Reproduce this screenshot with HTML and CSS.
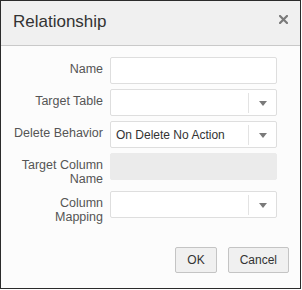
FILE: index.html
```html
<!DOCTYPE html>
<html>
<head>
    <title>Relationship</title>
    <link rel="stylesheet" href="styles.css">
</head>
<body>
    <div class="dialog">
        <div class="dialog-header">
            <h2 class="dialog-title">Relationship</h2>
            <button class="close-button" title="Close">
                <svg width="9" height="9" viewBox="0 0 9 9">
                    <path d="M1 1 L8 8 M8 1 L1 8" stroke="#7a7a7a" stroke-width="2.2" stroke-linecap="square"/>
                </svg>
            </button>
        </div>

        <div class="dialog-body">
            <div class="form-grid">
                <label class="field-label">Name</label>
                <input type="text" class="text-field">

                <label class="field-label">Target Table</label>
                <div class="select-field">
                    <span class="select-value"></span>
                    <span class="select-arrow"></span>
                </div>

                <label class="field-label">Delete Behavior</label>
                <div class="select-field">
                    <span class="select-value">On Delete No Action</span>
                    <span class="select-arrow"></span>
                </div>

                <label class="field-label">Target Column Name</label>
                <div class="text-field disabled"></div>

                <label class="field-label">Column Mapping</label>
                <div class="select-field">
                    <span class="select-value"></span>
                    <span class="select-arrow"></span>
                </div>
            </div>
        </div>

        <div class="dialog-footer">
            <button class="dialog-button">OK</button>
            <button class="dialog-button">Cancel</button>
        </div>
    </div>
</body>
</html>
```

FILE: styles.css
```css
/* Reset and base styles */
* {
    margin: 0;
    padding: 0;
    box-sizing: border-box;
    font-family: "Liberation Sans", Arial, sans-serif;
}

body {
    background-color: #ffffff;
    color: #333333;
}

.dialog {
    width: 301px;
    height: 289px;
    border: 1px solid #2b2b2b;
    background: #fcfcfc;
    display: flex;
    flex-direction: column;
}

/* Header */
.dialog-header {
    height: 45px;
    background: #f0f0f0;
    border-bottom: 1px solid #c9c9c9;
    display: flex;
    justify-content: space-between;
    align-items: flex-start;
    padding: 11px 12px 0 12px;
}

.dialog-title {
    font-size: 17px;
    font-weight: normal;
    line-height: 20px;
    color: #333333;
}

.close-button {
    background: none;
    border: none;
    width: 9px;
    height: 9px;
    margin-top: 3px;
    cursor: pointer;
    display: flex;
}

/* Form */
.dialog-body {
    padding: 11px 0 0 12px;
}

.form-grid {
    display: grid;
    grid-template-columns: 90px 167px;
    column-gap: 7px;
    row-gap: 5px;
    align-items: start;
}

.field-label {
    font-size: 12.5px;
    line-height: 13.5px;
    color: #555555;
    text-align: right;
    padding-top: 6px;
}

.text-field {
    height: 27px;
    border: 1px solid #dedede;
    border-radius: 2px;
    background: #ffffff;
    font-size: 12px;
    outline: none;
}

.text-field.disabled {
    background: #ebebeb;
    border-color: #ebebeb;
}

.select-field {
    height: 27px;
    border: 1px solid #dedede;
    border-radius: 2px;
    background: #ffffff;
    display: flex;
    align-items: center;
}

.select-value {
    flex: 1;
    font-size: 12px;
    color: #333333;
    padding-left: 5px;
    white-space: nowrap;
}

.select-arrow {
    width: 28px;
    height: 20px;
    border-left: 1px solid #e3e3e3;
    display: flex;
    align-items: center;
    justify-content: center;
}

.select-arrow::after {
    content: "";
    border-left: 4.5px solid transparent;
    border-right: 4.5px solid transparent;
    border-top: 5px solid #7a7a7a;
    margin-top: 1px;
}

/* Footer */
.dialog-footer {
    margin-top: auto;
    display: flex;
    justify-content: flex-end;
    gap: 11px;
    padding: 0 11px 15px 0;
}

.dialog-button {
    height: 26px;
    padding: 0 11px;
    min-width: 41px;
    background: #f0f0f0;
    border: 1px solid #c4c4c4;
    border-radius: 2px;
    font-size: 12px;
    color: #333333;
    cursor: pointer;
}
```
